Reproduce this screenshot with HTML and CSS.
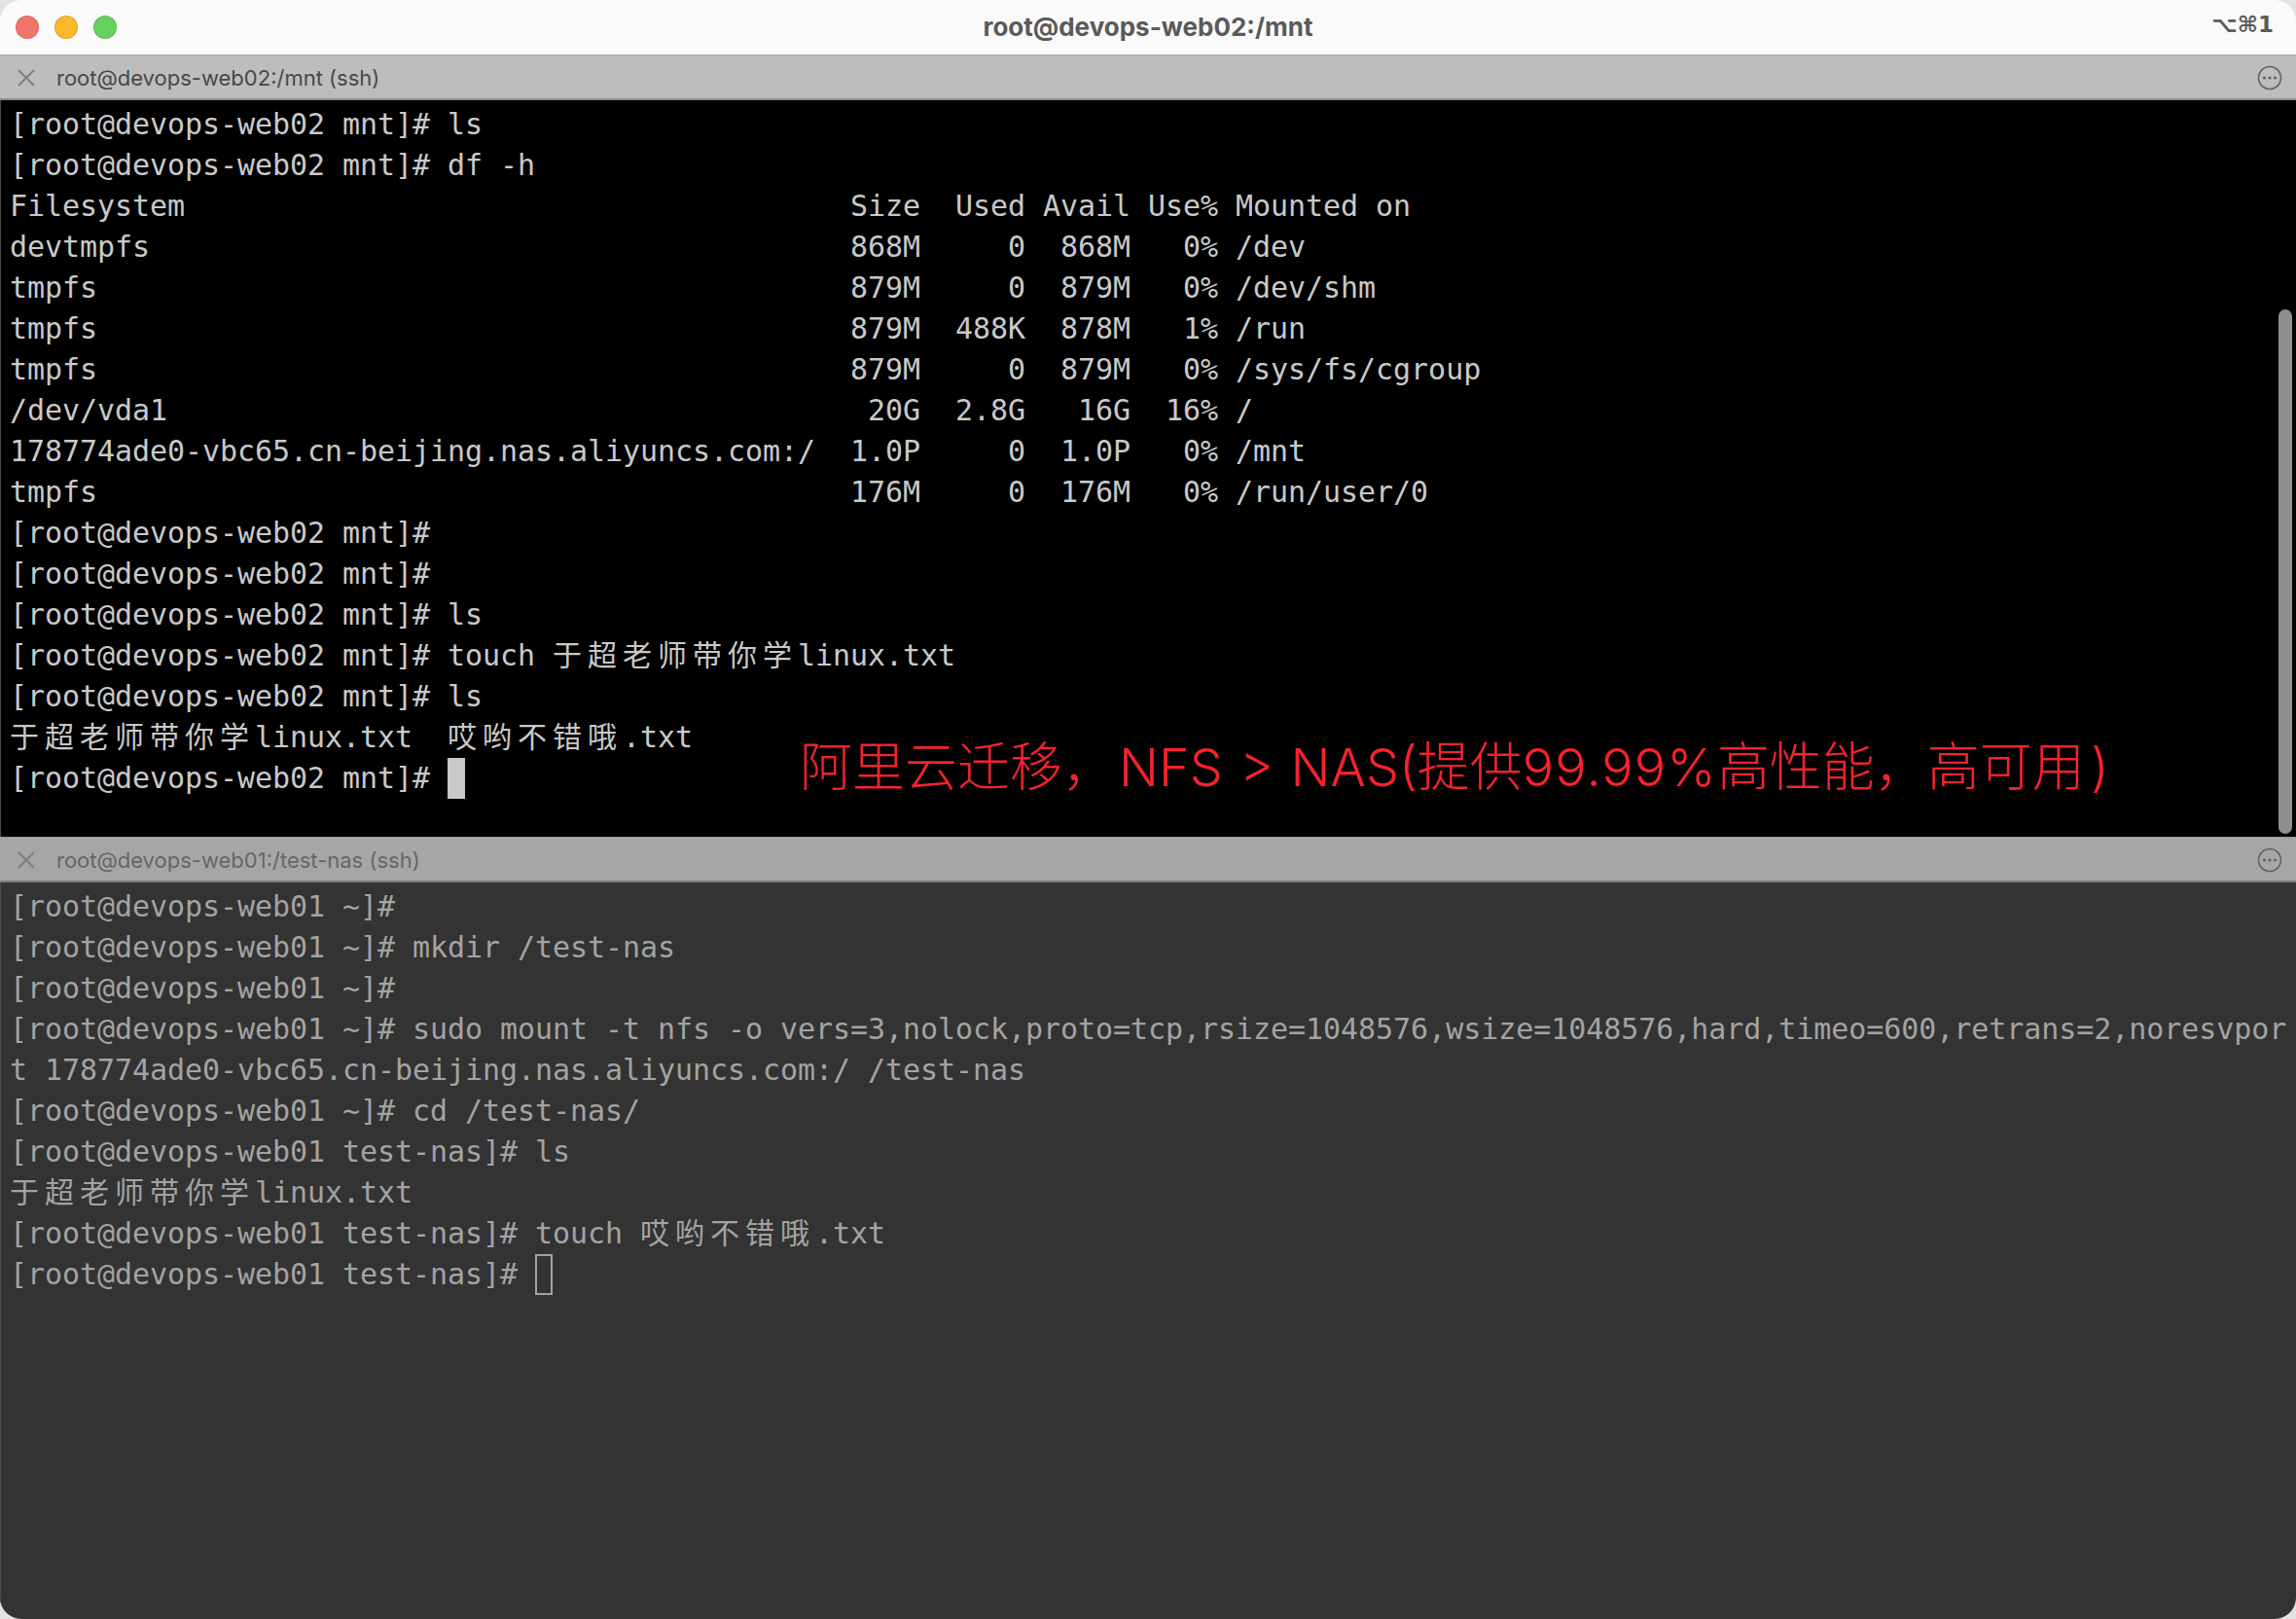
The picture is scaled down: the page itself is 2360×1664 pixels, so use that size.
FILE: index.html
```html
<!DOCTYPE html>
<html lang="zh-CN">
<head>
<meta charset="utf-8">
<title>root@devops-web02:/mnt</title>
<link rel="stylesheet" href="styles.css">
</head>
<body>
<div class="window">
  <header class="titlebar">
    <div class="lights">
      <span class="light red"></span>
      <span class="light yellow"></span>
      <span class="light green"></span>
    </div>
    <div class="title">root@devops-web02:/mnt</div>
    <div class="shortcut">⌥⌘1</div>
  </header>

  <section class="pane pane-active">
    <div class="tab">
      <svg class="tab-close" width="18" height="18" viewBox="0 0 18 18"><path d="M1 1L17 17M17 1L1 17"/></svg>
      <span class="tab-label">root@devops-web02:/mnt (ssh)</span>
      <svg class="tab-more" width="26" height="26" viewBox="0 0 26 26"><circle class="ring" cx="13" cy="13" r="11.5"/><circle cx="7.5" cy="13" r="1.6"/><circle cx="13" cy="13" r="1.6"/><circle cx="18.5" cy="13" r="1.6"/></svg>
    </div>
    <div class="term">
      <div class="ln">[root@devops-web02 mnt]# ls</div>
      <div class="ln">[root@devops-web02 mnt]# df -h</div>
      <div class="ln">Filesystem                                      Size  Used Avail Use% Mounted on</div>
      <div class="ln">devtmpfs                                        868M     0  868M   0% /dev</div>
      <div class="ln">tmpfs                                           879M     0  879M   0% /dev/shm</div>
      <div class="ln">tmpfs                                           879M  488K  878M   1% /run</div>
      <div class="ln">tmpfs                                           879M     0  879M   0% /sys/fs/cgroup</div>
      <div class="ln">/dev/vda1                                        20G  2.8G   16G  16% /</div>
      <div class="ln">178774ade0-vbc65.cn-beijing.nas.aliyuncs.com:/  1.0P     0  1.0P   0% /mnt</div>
      <div class="ln">tmpfs                                           176M     0  176M   0% /run/user/0</div>
      <div class="ln">[root@devops-web02 mnt]#</div>
      <div class="ln">[root@devops-web02 mnt]#</div>
      <div class="ln">[root@devops-web02 mnt]# ls</div>
      <div class="ln">[root@devops-web02 mnt]# touch <span class="w">于超老师带你学</span>linux.txt</div>
      <div class="ln">[root@devops-web02 mnt]# ls</div>
      <div class="ln"><span class="w">于超老师带你学</span>linux.txt  <span class="w">哎哟不错哦</span>.txt</div>
      <div class="ln">[root@devops-web02 mnt]# <span class="cursor"></span></div>
      <div class="note">阿里云迁移，<span class="note-latin note-nfs">NFS &gt; NAS(</span>提供<span class="note-latin note-num">99.99%</span>高性能，高可用<span class="note-latin note-close">)</span></div>
      <div class="scrollbar"></div>
    </div>
  </section>

  <section class="pane pane-dim">
    <div class="tab">
      <svg class="tab-close" width="18" height="18" viewBox="0 0 18 18"><path d="M1 1L17 17M17 1L1 17"/></svg>
      <span class="tab-label">root@devops-web01:/test-nas (ssh)</span>
      <svg class="tab-more" width="26" height="26" viewBox="0 0 26 26"><circle class="ring" cx="13" cy="13" r="11.5"/><circle cx="7.5" cy="13" r="1.6"/><circle cx="13" cy="13" r="1.6"/><circle cx="18.5" cy="13" r="1.6"/></svg>
    </div>
    <div class="term">
      <div class="ln">[root@devops-web01 ~]#</div>
      <div class="ln">[root@devops-web01 ~]# mkdir /test-nas</div>
      <div class="ln">[root@devops-web01 ~]#</div>
      <div class="ln">[root@devops-web01 ~]# sudo mount -t nfs -o vers=3,nolock,proto=tcp,rsize=1048576,wsize=1048576,hard,timeo=600,retrans=2,noresvpor</div>
      <div class="ln">t 178774ade0-vbc65.cn-beijing.nas.aliyuncs.com:/ /test-nas</div>
      <div class="ln">[root@devops-web01 ~]# cd /test-nas/</div>
      <div class="ln">[root@devops-web01 test-nas]# ls</div>
      <div class="ln"><span class="w">于超老师带你学</span>linux.txt</div>
      <div class="ln">[root@devops-web01 test-nas]# touch <span class="w">哎哟不错哦</span>.txt</div>
      <div class="ln">[root@devops-web01 test-nas]# <span class="cursor cursor-hollow"></span></div>
    </div>
  </section>
</div>
</body>
</html>
```
FILE: styles.css
```css
* { box-sizing: border-box; }
html, body { margin: 0; padding: 0; background: #e3e3e3; }
body { width: 2360px; height: 1664px; overflow: hidden; }

.window {
  width: 2360px;
  height: 1664px;
  display: flex;
  flex-direction: column;
  border-radius: 22px;
  overflow: hidden;
}

.titlebar {
  flex: 0 0 56px;
  display: grid;
  grid-template-columns: 1fr auto 1fr;
  align-items: center;
  background: #fafafa;
  padding: 0 16px;
}
.lights { display: flex; gap: 16px; }
.light { width: 24px; height: 24px; border-radius: 50%; border: 1px solid rgba(0,0,0,.1); }
.red { background: #f1746a; }
.yellow { background: #f9b92b; }
.green { background: #66cf5d; }
.title {
  font: 700 26px/54px Inter, "Liberation Sans", sans-serif;
  color: #5a5a5a;
}
.shortcut {
  padding-right: 7px;
  text-align: right;
  font: 700 23px/50px "DejaVu Sans", sans-serif;
  color: #5c5c5c;
  align-self: start;
}

.pane { display: flex; flex-direction: column; }
.pane-active { flex: 0 0 804px; }
.pane-dim { flex: 1 1 0; min-height: 0; }

.tab {
  flex: 0 0 46px;
  display: flex;
  align-items: center;
  padding: 2px 14px 0 18px;
  font: 400 22px/42px Inter, "Liberation Sans", sans-serif;
}
.pane-active .tab {
  background: #bdbdbd;
  border-top: 1px solid #a9a9a9;
  border-bottom: 2px solid #8f8f8f;
  color: #484848;
}
.pane-dim .tab {
  background: #a6a6a6;
  border-top: 1px solid #9a9a9a;
  border-bottom: 2px solid #7b7b7b;
  color: #666;
}
.tab-close { flex: none; margin-right: 22px; }
.tab-close path { fill: none; stroke: #7f7f7f; stroke-width: 2; }
.tab-label { flex: 1 1 auto; }
.tab-more { flex: none; fill: #626262; }
.tab-more .ring { fill: none; stroke: #626262; stroke-width: 1.6; }

.term {
  position: relative;
  flex: 1 1 auto;
  min-height: 0;
  padding: 4px 0 0 9px;
  border-left: 1px solid #4a4a4a;
  font: 400 30px/42px "DejaVu Sans Mono", "Noto Sans CJK SC", monospace;
  letter-spacing: -0.06px;
}
.pane-active .term { background: #000; color: #c9c9c9; }
.pane-dim .term { background: #333; color: #a3a3a3; }

.ln { height: 42px; white-space: pre; }
.w { font-family: "Noto Sans CJK SC", sans-serif; letter-spacing: 6px; line-height: 0; }

.cursor { display: inline-block; width: 18px; height: 42px; background: #c9c9c9; vertical-align: top; }
.cursor-hollow { background: none; border: 2px solid #a3a3a3; }

.note {
  position: absolute;
  left: 821px;
  top: 650px;
  font: 300 54px/64px "Noto Sans CJK SC", sans-serif;
  letter-spacing: 0;
  color: #f5222d;
  white-space: pre;
}
.note-latin { font-family: Inter, "Liberation Sans", sans-serif; }
.note-nfs { margin-left: 4px; word-spacing: 2px; }
.note-num { letter-spacing: 1px; }
.note-close { margin-left: 6px; }
.scrollbar {
  position: absolute;
  right: 4px;
  top: 215px;
  width: 14px;
  height: 539px;
  border-radius: 7px;
  background: #8e8e8e;
}
```
